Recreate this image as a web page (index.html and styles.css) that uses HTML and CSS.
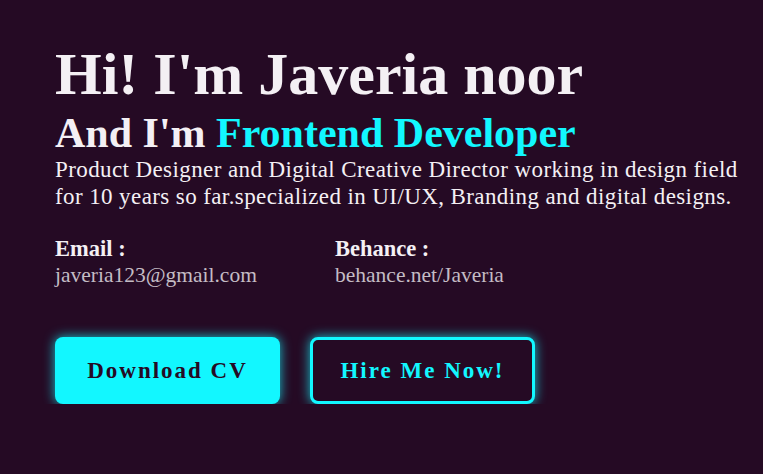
FILE: index.html
```html
<!DOCTYPE html>
<html>
<head>
<meta charset="utf-8">
<link rel="stylesheet" href="styles.css">
</head>
<body>
<section class="hero">
  <h1 class="title">Hi! I'm Javeria noor</h1>
  <h2 class="subtitle">And I'm <span class="accent">Frontend Developer</span></h2>
  <p class="intro">Product Designer and Digital Creative Director working in design field for 10 years so far.specialized in UI/UX, Branding and digital designs.</p>
  <div class="contacts">
    <div class="contact">
      <div class="label">Email :</div>
      <div class="value">javeria123@gmail.com</div>
    </div>
    <div class="contact">
      <div class="label">Behance :</div>
      <div class="value">behance.net/Javeria</div>
    </div>
  </div>
  <div class="actions">
    <a class="btn btn-fill" href="#">Download CV</a>
    <a class="btn btn-outline" href="#">Hire Me Now!</a>
  </div>
</section>
</body>
</html>
```
FILE: styles.css
```css
html, body {
  margin: 0;
  padding: 0;
  background: #250a24;
}
body {
  font-family: "Liberation Serif", "Times New Roman", serif;
  color: #f4f0f4;
}
.hero {
  padding: 38px 20px 0 55px;
}
.title {
  margin: 0;
  font-size: 60px;
  line-height: 72px;
  font-weight: bold;
}
.subtitle {
  margin: 0;
  font-size: 42px;
  line-height: 46px;
  font-weight: bold;
}
.accent {
  color: #12f7ff;
}
.intro {
  margin: 0;
  max-width: 700px;
  font-size: 23px;
  line-height: 27px;
  letter-spacing: 0.4px;
}
.contacts {
  display: flex;
  margin-top: 25px;
}
.contact {
  width: 280px;
}
.label {
  font-weight: bold;
  font-size: 22.5px;
  line-height: 27px;
}
.value {
  font-size: 21.5px;
  line-height: 26px;
  color: #c4bcc4;
}
.actions {
  display: flex;
  gap: 30px;
  margin-top: 49px;
}
.btn {
  box-sizing: border-box;
  width: 225px;
  height: 67px;
  display: flex;
  align-items: center;
  justify-content: center;
  border-radius: 8px;
  font-size: 23px;
  font-weight: bold;
  letter-spacing: 2px;
  text-decoration: none;
  box-shadow: 0 0 12px rgba(18, 247, 255, 0.8);
}
.btn-fill {
  background: #12f7ff;
  color: #250a24;
}
.btn-outline {
  background: #250a24;
  color: #12f7ff;
  border: 3px solid #12f7ff;
}
```
